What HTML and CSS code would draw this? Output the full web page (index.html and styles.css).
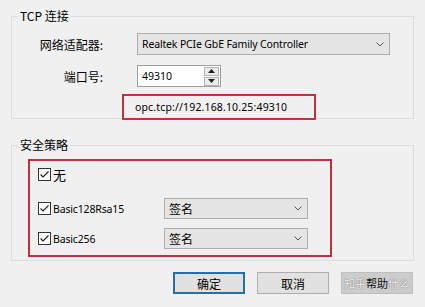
FILE: index.html
```html
<!DOCTYPE html>
<html lang="zh-CN">
<head>
<meta charset="utf-8">
<title>TCP 连接</title>
<link rel="stylesheet" href="styles.css">
</head>
<body>
<div class="dialog">
  <fieldset class="group tcp">
    <legend>TCP 连接</legend>
    <div class="form">
      <span class="lbl">网络适配器:</span>
      <div class="combo wide"><span class="combo-text">Realtek PCIe GbE Family Controller</span><svg class="chev" width="8" height="5" viewBox="0 0 8 5"><path d="M0.5 0.5 L4 4 L7.5 0.5" fill="none" stroke="#555" stroke-width="1"/></svg></div>
      <span class="lbl lbl2">端口号:</span>
      <div class="spin">
        <span class="spin-val">49310</span>
        <div class="spin-btns">
          <span class="sb"><svg width="7" height="4" viewBox="0 0 7 4"><path d="M0 4 L3.5 0 L7 4 Z" fill="#222"/></svg></span>
          <span class="sb"><svg width="7" height="4" viewBox="0 0 7 4"><path d="M0 0 L3.5 4 L7 0 Z" fill="#222"/></svg></span>
        </div>
      </div>
    </div>
    <div class="url-box">opc.tcp://192.168.10.25:49310</div>
  </fieldset>

  <fieldset class="group sec">
    <legend>安全策略</legend>
    <div class="policy-box">
      <div class="prow first">
        <span class="chk"><svg width="13" height="13" viewBox="0 0 13 13"><path d="M2.5 6.5 L5 9 L10.5 3.5" fill="none" stroke="#222" stroke-width="1.1"/></svg></span>
        <span class="cjk-label">无</span>
      </div>
      <div class="prow">
        <div class="chk-label"><span class="chk"><svg width="13" height="13" viewBox="0 0 13 13"><path d="M2.5 6.5 L5 9 L10.5 3.5" fill="none" stroke="#222" stroke-width="1.1"/></svg></span><span>Basic128Rsa15</span></div>
        <div class="combo small"><span class="combo-text">签名</span><svg class="chev" width="8" height="5" viewBox="0 0 8 5"><path d="M0.5 0.5 L4 4 L7.5 0.5" fill="none" stroke="#555" stroke-width="1"/></svg></div>
      </div>
      <div class="prow last">
        <div class="chk-label"><span class="chk"><svg width="13" height="13" viewBox="0 0 13 13"><path d="M2.5 6.5 L5 9 L10.5 3.5" fill="none" stroke="#222" stroke-width="1.1"/></svg></span><span>Basic256</span></div>
        <div class="combo small"><span class="combo-text">签名</span><svg class="chev" width="8" height="5" viewBox="0 0 8 5"><path d="M0.5 0.5 L4 4 L7.5 0.5" fill="none" stroke="#555" stroke-width="1"/></svg></div>
      </div>
    </div>
  </fieldset>

  <div class="buttons">
    <button class="btn default">确定</button>
    <button class="btn">取消</button>
    <button class="btn disabled"><span class="wm">知乎</span><span class="help">帮助</span><span class="wm">什么</span></button>
  </div>
</div>
</body>
</html>
```

FILE: styles.css
```css
html, body {
  margin: 0;
  padding: 0;
  background: #f0f0f0;
}

body {
  font-family: "Noto Sans", "Noto Sans CJK SC", sans-serif;
  font-size: 12px;
  color: #000;
}

.dialog {
  width: 425px;
  height: 307px;
  box-sizing: border-box;
  padding: 8px 11px 0 11px;
}

.group {
  margin: 0;
  padding: 0;
  border: 1px solid #dcdcdc;
  min-width: 0;
}

.group legend {
  margin-left: 6px;
  padding: 0 2px;
  font-family: "Noto Sans CJK SC", sans-serif;
  font-size: 12px;
  line-height: 16px;
}

.form {
  display: grid;
  grid-template-columns: 91px 253px;
  column-gap: 34px;
  row-gap: 10px;
  margin-top: 9px;
  align-items: center;
}

.lbl {
  text-align: right;
  font-family: "Noto Sans CJK SC", sans-serif;
  font-size: 12px;
}

.combo {
  box-sizing: border-box;
  display: flex;
  align-items: center;
  justify-content: space-between;
  background: #e5e5e5;
  border: 1px solid #adadad;
  padding: 0 5px 0 4px;
}

.combo.wide {
  height: 22px;
  width: 253px;
}

.combo.small {
  height: 21px;
  width: 144px;
}

.combo-text {
  font-size: 10.5px;
  letter-spacing: -0.15px;
  line-height: 14px;
  white-space: nowrap;
}

.combo.small .combo-text {
  font-family: "Noto Sans CJK SC", sans-serif;
  font-size: 12px;
  letter-spacing: 0;
}

.chev {
  display: block;
  flex: none;
}

.spin {
  box-sizing: border-box;
  width: 84px;
  height: 22px;
  background: #fff;
  border: 1px solid #a0a0a0;
  display: flex;
  align-items: center;
  justify-content: space-between;
  padding: 0 1px 0 4px;
}

.spin-val {
  font-size: 10.5px;
}

.spin-btns {
  display: flex;
  flex-direction: column;
  gap: 1px;
}

.sb {
  box-sizing: border-box;
  width: 15px;
  height: 9px;
  border: 1px solid #b4b4b4;
  background: #ececec;
  display: flex;
  align-items: center;
  justify-content: center;
}

.sb svg {
  display: block;
}

.url-box {
  box-sizing: border-box;
  width: 194px;
  height: 26px;
  margin: 7px 0 -2px 110px;
  border: 2px solid #c1303e;
  display: flex;
  align-items: center;
  padding-left: 11px;
  font-size: 10.5px;
  letter-spacing: 0.15px;
  white-space: nowrap;
  position: relative;
}

.sec {
  margin-top: 18px;
  padding-bottom: 3px;
}

.policy-box {
  box-sizing: border-box;
  width: 304px;
  margin: 6px 0 0 16px;
  border: 2px solid #c1303e;
  padding: 7px 0 6px 8px;
}

.prow {
  display: flex;
  align-items: center;
  height: 21px;
  margin-top: 9px;
}

.prow.first {
  height: 13px;
  margin-top: 0;
  margin-bottom: 17px;
}

.chk-label {
  width: 126px;
  display: flex;
  align-items: center;
  font-size: 10.5px;
  letter-spacing: -0.15px;
  white-space: nowrap;
}

.chk {
  box-sizing: border-box;
  width: 13px;
  height: 13px;
  border: 1px solid #333;
  background: #fff;
  flex: none;
  margin-right: 2px;
  display: block;
}

.chk svg {
  display: block;
  margin: -1px 0 0 -1px;
}

.cjk-label {
  font-family: "Noto Sans CJK SC", sans-serif;
  font-size: 13px;
}

.buttons {
  display: flex;
  justify-content: flex-end;
  gap: 12px;
  margin-top: 11px;
  padding-right: 1px;
}

.btn {
  box-sizing: border-box;
  width: 72px;
  height: 22px;
  margin: 0;
  padding: 0;
  background: #e1e1e1;
  border: 1px solid #adadad;
  font-family: "Noto Sans CJK SC", sans-serif;
  font-size: 12px;
  color: #000;
  display: flex;
  align-items: center;
  justify-content: center;
  white-space: nowrap;
}

.btn.default {
  border: 2px solid #2a6ea8;
}

.btn.disabled {
  background: #cccccc;
  border-color: #bfbfbf;
  font-size: 11px;
}

.wm {
  color: #f4f4f4;
  text-shadow: 0 0 1px #777, 0 0 1px #777;
}

.help {
  color: #111;
}
```
